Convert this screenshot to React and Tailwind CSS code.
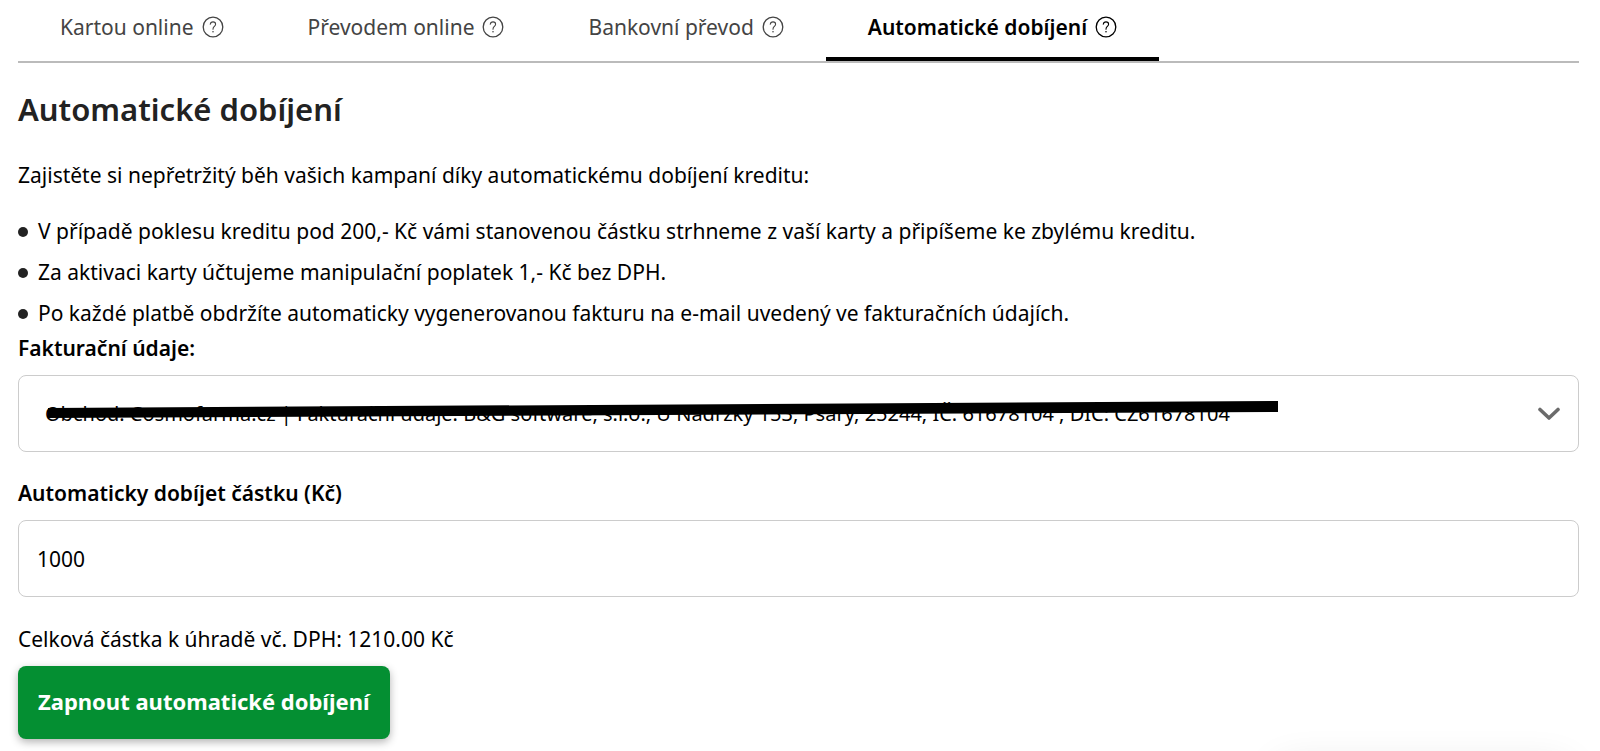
import React, { useState } from "react";

const tabs = [
  { id: "card", label: "Kartou online" },
  { id: "transfer", label: "Převodem online" },
  { id: "bank", label: "Bankovní převod" },
  { id: "auto", label: "Automatické dobíjení" },
];

const benefits = [
  "V případě poklesu kreditu pod 200,- Kč vámi stanovenou částku strhneme z vaší karty a připíšeme ke zbylému kreditu.",
  "Za aktivaci karty účtujeme manipulační poplatek 1,- Kč bez DPH.",
  "Po každé platbě obdržíte automaticky vygenerovanou fakturu na e-mail uvedený ve fakturačních údajích.",
];

const HelpIcon = () => (
  <svg viewBox="0 0 22 22" className="size-[22px] shrink-0" fill="none" stroke="currentColor" aria-hidden="true">
    <circle cx="11" cy="11" r="9.8" strokeWidth="1.3" />
    <path d="M8.3 8.3c.2-1.5 1.3-2.4 2.7-2.4 1.5 0 2.6.9 2.6 2.3 0 1.2-.8 1.8-1.5 2.4-.8.7-1.1 1.2-1.1 2.6" strokeWidth="1.1" strokeLinecap="round" />
    <circle cx="11" cy="15.8" r=".8" fill="currentColor" stroke="none" />
  </svg>
);

const App = () => {
  const [active, setActive] = useState("auto");
  const [amount, setAmount] = useState("1000");

  return (
    <main className="bg-white text-black pl-[18px] pr-[21px] pb-3 font-['Noto_Sans',sans-serif] text-[21px] leading-[30px]">
      {/* Payment methods */}
      <nav className="flex border-b-2 border-[#bbbbbb]">
        {tabs.map((tab) => (
          <button
            key={tab.id}
            type="button"
            onClick={() => setActive(tab.id)}
            className={`flex items-center gap-2 px-[42px] pt-3 pb-[15px] border-b-4 cursor-pointer ${
              active === tab.id ? "border-black font-semibold text-black" : "border-transparent text-[#444444]"
            }`}
          >
            {tab.label}
            <HelpIcon />
          </button>
        ))}
      </nav>

      <h1 className="mt-6 text-[31px] leading-[44px] font-semibold text-[#222222]">Automatické dobíjení</h1>
      <p className="mt-[29px]">Zajistěte si nepřetržitý běh vašich kampaní díky automatickému dobíjení kreditu:</p>

      <ul className="mt-[21px]">
        {benefits.map((text) => (
          <li key={text} className="flex items-center gap-[10px] leading-[41px]">
            <span className="size-[10px] shrink-0 rounded-full bg-[#222222]"></span>
            {text}
          </li>
        ))}
      </ul>

      {/* Billing details */}
      <label htmlFor="billing" className="block leading-[29px] font-semibold">
        Fakturační údaje:
      </label>
      <div className="relative mt-3">
        <select
          id="billing"
          className="block w-full h-[77px] pl-[26px] pr-16 appearance-none rounded-lg border border-[#cccccc] bg-white text-[20px]"
        >
          <option>
            Obchod: Cosmofarma.cz | Fakturační údaje: B&G software, s.r.o., U Nádržky 153, Psáry, 25244, IČ: 61678104 , DIČ: CZ61678104
          </option>
        </select>
        <svg viewBox="0 0 1234 20" className="absolute left-[30px] top-[25px] w-[1234px] pointer-events-none" aria-hidden="true">
          <path d="M0 8 L1230 1 V12 L0 18 Z" fill="#000" />
        </svg>
        <svg
          viewBox="0 0 24 14"
          className="absolute right-[18px] top-[32px] w-6 pointer-events-none"
          fill="none"
          stroke="#6b6b6b"
          strokeWidth="3.6"
          strokeLinecap="round"
          strokeLinejoin="round"
          aria-hidden="true"
        >
          <path d="M3 2.5 L12 11 L21 2.5" />
        </svg>
      </div>

      {/* Amount */}
      <label htmlFor="amount" className="block mt-[27px] leading-[29px] font-semibold">
        Automaticky dobíjet částku (Kč)
      </label>
      <input
        id="amount"
        type="text"
        value={amount}
        onChange={(e) => setAmount(e.target.value)}
        className="block mt-3 w-full h-[77px] px-[18px] rounded-lg border border-[#cccccc] bg-white"
      />

      <p className="mt-[27px]">Celková částka k úhradě vč. DPH: 1210.00 Kč</p>
      <button
        type="button"
        className="mt-3 px-5 pt-5 pb-[23px] rounded-lg bg-[#048f32] text-white text-[22px] leading-[30px] font-bold shadow-[0_3px_8px_rgba(0,0,0,0.3)] cursor-pointer"
      >
        Zapnout automatické dobíjení
      </button>

      {/* Panel docked under the bottom edge, only its shadow shows */}
      <div className="fixed -bottom-16 right-8 h-12 w-[290px] rounded-lg bg-white shadow-[0_0_40px_rgba(0,0,0,0.12)]" aria-hidden="true"></div>
    </main>
  );
};

export default App;
